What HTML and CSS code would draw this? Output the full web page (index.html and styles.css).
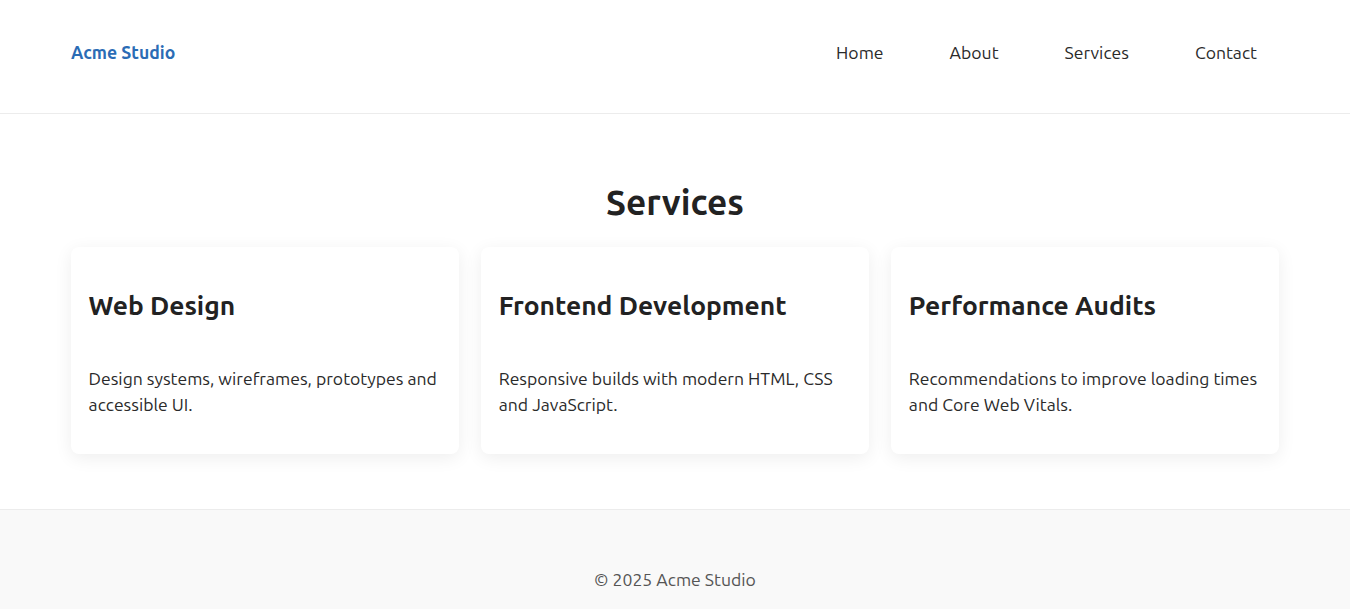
FILE: index.html
```html
<!DOCTYPE html>
<html lang="en">
<head>
<meta charset="utf-8">
<title>Acme Studio</title>
<link rel="stylesheet" href="styles.css">
</head>
<body>
<header class="site-header">
  <div class="container header-inner">
    <a class="logo" href="#">Acme Studio</a>
    <nav class="nav">
      <a href="#">Home</a>
      <a href="#">About</a>
      <a href="#">Services</a>
      <a href="#">Contact</a>
    </nav>
  </div>
</header>
<main class="services">
  <div class="container">
    <h2 class="section-title">Services</h2>
    <div class="cards">
      <article class="card">
        <h3>Web Design</h3>
        <p>Design systems, wireframes, prototypes and accessible UI.</p>
      </article>
      <article class="card">
        <h3>Frontend Development</h3>
        <p>Responsive builds with modern HTML, CSS and JavaScript.</p>
      </article>
      <article class="card">
        <h3>Performance Audits</h3>
        <p>Recommendations to improve loading times and Core Web Vitals.</p>
      </article>
    </div>
  </div>
</main>
<footer class="site-footer">
  <p>© 2025 Acme Studio</p>
</footer>
</body>
</html>
```
FILE: styles.css
```css
* { box-sizing: border-box; }
html, body { margin: 0; padding: 0; }
body {
  font-family: "Ubuntu", "Noto Sans", "Open Sans", sans-serif;
  font-size: 17.6px;
  line-height: 26px;
  color: #222;
  background: #fff;
}
a { text-decoration: none; }
.container {
  padding: 0 71px;
}
.site-header {
  height: 114px;
  border-bottom: 1px solid #ececec;
}
.header-inner {
  height: 100%;
  display: flex;
  align-items: center;
  justify-content: space-between;
  padding-bottom: 8px;
}
.logo {
  color: #2b6cb5;
  font-weight: 700;
  font-size: 17.6px;
}
.nav {
  display: flex;
  gap: 22px;
}
.nav a {
  color: #2a2a2a;
  font-size: 17.6px;
  padding: 0 22px;
}
.services {
  padding: 67px 0 55px;
}
.section-title {
  margin: 0 0 23px;
  text-align: center;
  font-size: 35.2px;
  line-height: 43px;
  font-weight: 700;
  color: #222;
}
.cards {
  display: grid;
  grid-template-columns: repeat(3, 1fr);
  gap: 22.4px;
}
.card {
  background: #fff;
  border-radius: 8px;
  padding: 17px 17.6px 19px;
  box-shadow: 0 4px 18px rgba(0, 0, 0, 0.07);
}
.card h3 {
  margin: 26px 0 0;
  font-size: 26.4px;
  line-height: 31px;
  font-weight: 700;
  color: #222;
}
.card p {
  margin: 45px 0 17px;
  font-size: 17.6px;
  line-height: 26px;
  color: #2a2a2a;
}
.site-footer {
  background: #f9f9f9;
  border-top: 1px solid #ececec;
  padding: 57px 0 40px;
  text-align: center;
}
.site-footer p {
  margin: 0;
  color: #555;
  font-size: 17.6px;
}
```
